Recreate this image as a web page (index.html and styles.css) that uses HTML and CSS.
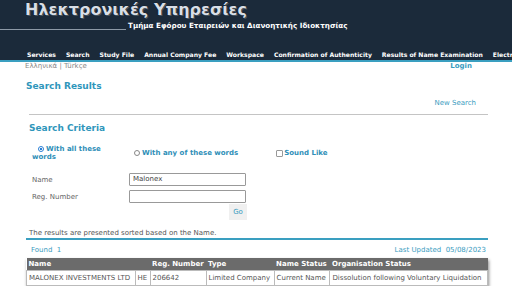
FILE: index.html
```html
<!DOCTYPE html>
<html lang="el">
<head>
    <meta charset="UTF-8">
    <title>Ηλεκτρονικές Υπηρεσίες</title>
    <link rel="stylesheet" href="styles.css">
</head>
<body>
    <div class="banner">
        <div class="title">Ηλεκτρονικές Υπηρεσίες</div>
        <div class="subtitle-row">
            <div class="rule"></div>
            <div class="subtitle">Τμήμα Εφόρου Εταιρειών και Διανοητικής Ιδιοκτησίας</div>
        </div>
        <ul class="nav">
            <li>Services</li>
            <li>Search</li>
            <li>Study File</li>
            <li>Annual Company Fee</li>
            <li>Workspace</li>
            <li>Confirmation of Authenticity</li>
            <li>Results of Name Examination</li>
            <li>Electronic Filing</li>
        </ul>
    </div>

    <div class="topbar">
        <div class="langs">Ελληνικά | Türkçe</div>
        <a class="login">Login</a>
    </div>

    <div class="page">
        <h1 class="page-title">Search Results</h1>
        <div class="new-search"><a>New Search</a></div>

        <div class="criteria">
            <h2>Search Criteria</h2>
            <div class="options">
                <label class="opt opt-all"><span class="radio checked"></span>With all these words</label>
                <label class="opt opt-any"><span class="radio"></span>With any of these words</label>
                <label class="opt opt-sound"><span class="check"></span>Sound Like</label>
            </div>

            <div class="field field-first">
                <span class="field-label">Name</span>
                <div class="input">Malonex</div>
            </div>
            <div class="field">
                <span class="field-label">Reg. Number</span>
                <div class="input"></div>
            </div>
            <div class="actions">
                <button class="go-btn">Go</button>
            </div>
        </div>

        <div class="sorted-note">The results are presented sorted based on the Name.</div>

        <div class="found-row">
            <span>Found&nbsp; 1</span>
            <span>Last Updated&nbsp; 05/08/2023</span>
        </div>

        <table class="results">
            <thead>
                <tr>
                    <th colspan="2">Name</th>
                    <th>Reg. Number</th>
                    <th>Type</th>
                    <th>Name Status</th>
                    <th>Organisation Status</th>
                </tr>
            </thead>
            <tbody>
                <tr>
                    <td>MALONEX INVESTMENTS LTD</td>
                    <td>HE</td>
                    <td class="reg">206642</td>
                    <td>Limited Company</td>
                    <td>Current Name</td>
                    <td>Dissolution following Voluntary Liquidation</td>
                </tr>
            </tbody>
        </table>
    </div>
</body>
</html>
```

FILE: styles.css
```css
* {
    margin: 0;
    padding: 0;
    box-sizing: border-box;
}

body {
    font-family: 'DejaVu Sans', Verdana, sans-serif;
    font-size: 7px;
    color: #555;
    background: white;
    overflow: hidden;
}

a {
    color: #3a9cc0;
    text-decoration: none;
}

/* header */

.banner {
    background: #1b2a3a;
    height: 62px;
    border-bottom: 2px solid #3a9fc0;
    display: flex;
    flex-direction: column;
    overflow: hidden;
}

.title {
    font-family: 'DejaVu Sans', sans-serif;
    font-weight: bold;
    font-size: 16px;
    color: #d8dee6;
    padding-left: 25px;
    line-height: 18px;
    margin-top: 1px;
    text-shadow: 0 0 1px #000, 1px 1px 0 #4c5a68;
}

.subtitle-row {
    display: flex;
    align-items: flex-end;
    height: 11px;
}

.rule {
    width: 126px;
    height: 100%;
    border-bottom: 1px solid #8d99a6;
    margin-right: 2px;
}

.subtitle {
    color: white;
    font-weight: bold;
    font-size: 7.2px;
    line-height: 9px;
    white-space: nowrap;
}

.nav {
    list-style: none;
    display: flex;
    gap: 10px;
    padding-left: 27px;
    margin-top: auto;
    padding-bottom: 1px;
    white-space: nowrap;
}

.nav li {
    color: white;
    font-weight: bold;
    font-size: 6.1px;
    line-height: 9px;
}

/* language bar */

.topbar {
    display: flex;
    justify-content: space-between;
    padding: 0 40px 0 25px;
    height: 12px;
    line-height: 8px;
}

.langs {
    color: #888;
}

.login {
    font-weight: bold;
}

/* content */

.page {
    padding: 0 24px 0 26px;
}

.page-title {
    color: #2f96bb;
    font-size: 9px;
    font-weight: bold;
    padding-top: 6px;
    line-height: 12px;
}

.new-search {
    text-align: right;
    padding-right: 12px;
    margin-top: 6px;
    line-height: 10px;
}

.criteria {
    margin: 6px 0 0 3px;
    border-top: 1px solid #c4c4c4;
    padding-top: 7px;
}

.criteria h2 {
    color: #2f96bb;
    font-size: 9px;
    font-weight: bold;
    line-height: 12px;
}

.options {
    display: flex;
    align-items: center;
    margin-top: 11px;
    padding-left: 3px;
    color: #2f8fb8;
    font-weight: bold;
}

.opt {
    display: flex;
    align-items: center;
    line-height: 8px;
}

.opt-all {
    display: block;
    width: 102px;
    text-indent: 6px;
    padding-right: 20px;
}

.opt-sound {
    margin-left: 38px;
}

.radio {
    display: inline-block;
    width: 6px;
    height: 6px;
    border: 1px solid #888;
    border-radius: 50%;
    margin-right: 2px;
    text-indent: 0;
    vertical-align: -1px;
}

.radio.checked {
    border-color: #2a7fd6;
    background: radial-gradient(circle, #2a7fd6 45%, white 55%);
}

.check {
    width: 7px;
    height: 7px;
    border: 1px solid #999;
    border-radius: 1px;
    margin-right: 1px;
}

.field {
    display: flex;
    align-items: center;
    margin-top: 4px;
    padding-left: 3px;
}

.field-first {
    margin-top: 12px;
}

.field-label {
    width: 97px;
    color: #666;
}

.input {
    width: 117px;
    height: 13px;
    border: 1px solid #999;
    border-radius: 1px;
    padding-left: 3px;
    line-height: 11px;
    color: #444;
}

.actions {
    display: flex;
    padding-left: 200px;
    margin-top: 1px;
}

.go-btn {
    background: #f0f0f0;
    border: none;
    color: #3a9cc0;
    font-family: inherit;
    font-size: 7px;
    width: 18px;
    height: 16px;
}

.sorted-note {
    margin-top: 8px;
    color: #555;
    line-height: 10px;
    padding-left: 3px;
    border-bottom: 2px solid #3a9fc0;
}

.found-row {
    display: flex;
    justify-content: space-between;
    color: #3a9cc0;
    padding: 5px 2px 0 5px;
    line-height: 10px;
}

.results {
    margin-top: 3px;
    width: 100%;
    border-collapse: collapse;
    box-shadow: 1px 2px 3px rgba(0,0,0,0.45);
    font-size: 7px;
    white-space: nowrap;
}

.results th {
    background: #6b6b6b;
    color: white;
    text-align: left;
    font-weight: bold;
    padding: 1px 2px;
    height: 12px;
}

.results td {
    border: 1px solid #bbb;
    padding: 2px 2px;
    color: #555;
    height: 15px;
}

.results td.reg {
    width: 56px;
}
```
